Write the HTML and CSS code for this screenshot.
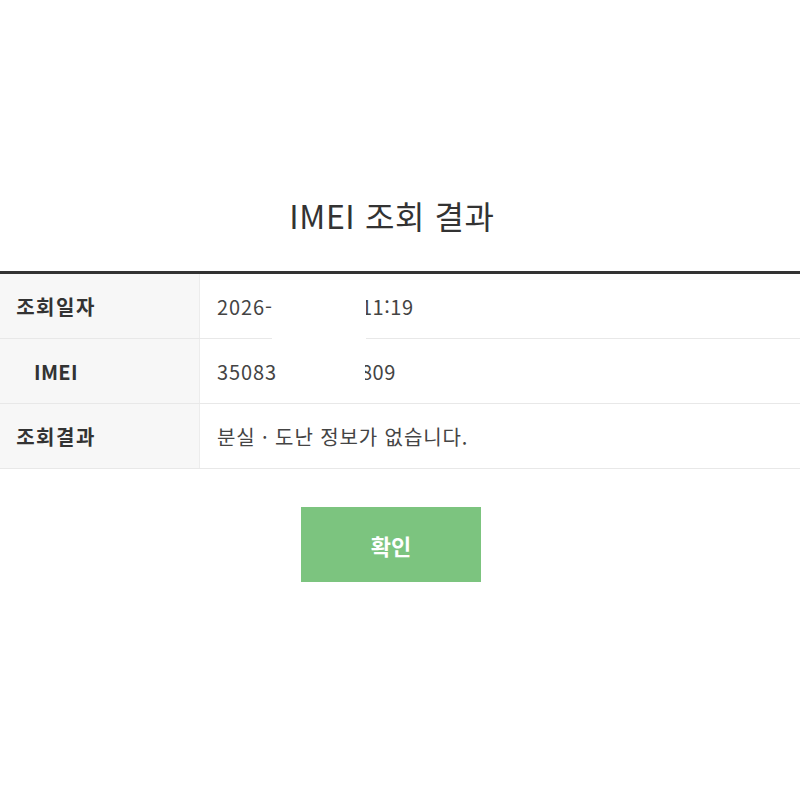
FILE: index.html
```html
<!DOCTYPE html>
<html lang="ko">
<head>
<meta charset="utf-8">
<title>IMEI 조회 결과</title>
<link rel="stylesheet" href="styles.css">
</head>
<body>
<div class="page">
  <h1 class="title">IMEI 조회 결과</h1>
  <div class="table">
    <div class="row">
      <div class="label"><span class="label-text">조회일자</span></div>
      <div class="value">2026-<span class="tail t1">11:19</span><span class="mask m1"></span></div>
    </div>
    <div class="row">
      <div class="label"><span class="label-text latin">IMEI</span></div>
      <div class="value">35083<span class="tail t2">809</span><span class="mask m2"></span></div>
    </div>
    <div class="row">
      <div class="label"><span class="label-text">조회결과</span></div>
      <div class="value">분실 · 도난 정보가 없습니다.</div>
    </div>
  </div>
  <div class="actions">
    <button class="btn">확인</button>
  </div>
</div>
</body>
</html>
```

FILE: styles.css
```css
html, body {
  margin: 0;
  padding: 0;
  background: #fff;
}
body {
  font-family: "Noto Sans CJK KR", "Noto Sans", sans-serif;
  color: #333;
}
.page {
  padding-top: 190px;
}
.title {
  margin: 0;
  padding-right: 16px;
  text-align: center;
  font-size: 32px;
  font-weight: 400;
  line-height: 50px;
  color: #333;
  letter-spacing: 0.6px;
}
.table {
  margin-top: 31px;
  border-top: 3px solid #333;
}
.row {
  display: flex;
  height: 64px;
  border-bottom: 1px solid #e8e8e8;
}
.label {
  width: 200px;
  box-sizing: border-box;
  flex: none;
  background: #f7f7f7;
  border-right: 1px solid #ececec;
  display: flex;
  align-items: center;
  padding-left: 16px;
}
.label-text {
  width: 80px;
  text-align: center;
  font-size: 20px;
  font-weight: 700;
  letter-spacing: 1.5px;
  color: #333;
}
.label-text.latin {
  letter-spacing: 0.3px;
}
.value {
  position: relative;
  display: flex;
  align-items: center;
  padding-left: 17px;
  font-size: 20px;
  letter-spacing: 0.9px;
  color: #444;
}
.tail {
  position: absolute;
  left: 161px;
  letter-spacing: 0.5px;
}
.mask {
  position: absolute;
  z-index: 1;
  top: 0;
  background: #fff;
}
.m1 { left: 72px; width: 94px; bottom: -1px; }
.m2 { left: 77px; width: 88px; bottom: 0; }
.actions {
  display: flex;
  justify-content: center;
  padding-top: 38px;
  padding-right: 18px;
}
.btn {
  width: 180px;
  height: 75px;
  border: 0;
  background: #7cc47f;
  color: #fff;
  font-family: "Noto Sans CJK KR", "Noto Sans", sans-serif;
  font-size: 22px;
  font-weight: 700;
  cursor: pointer;
}
```
